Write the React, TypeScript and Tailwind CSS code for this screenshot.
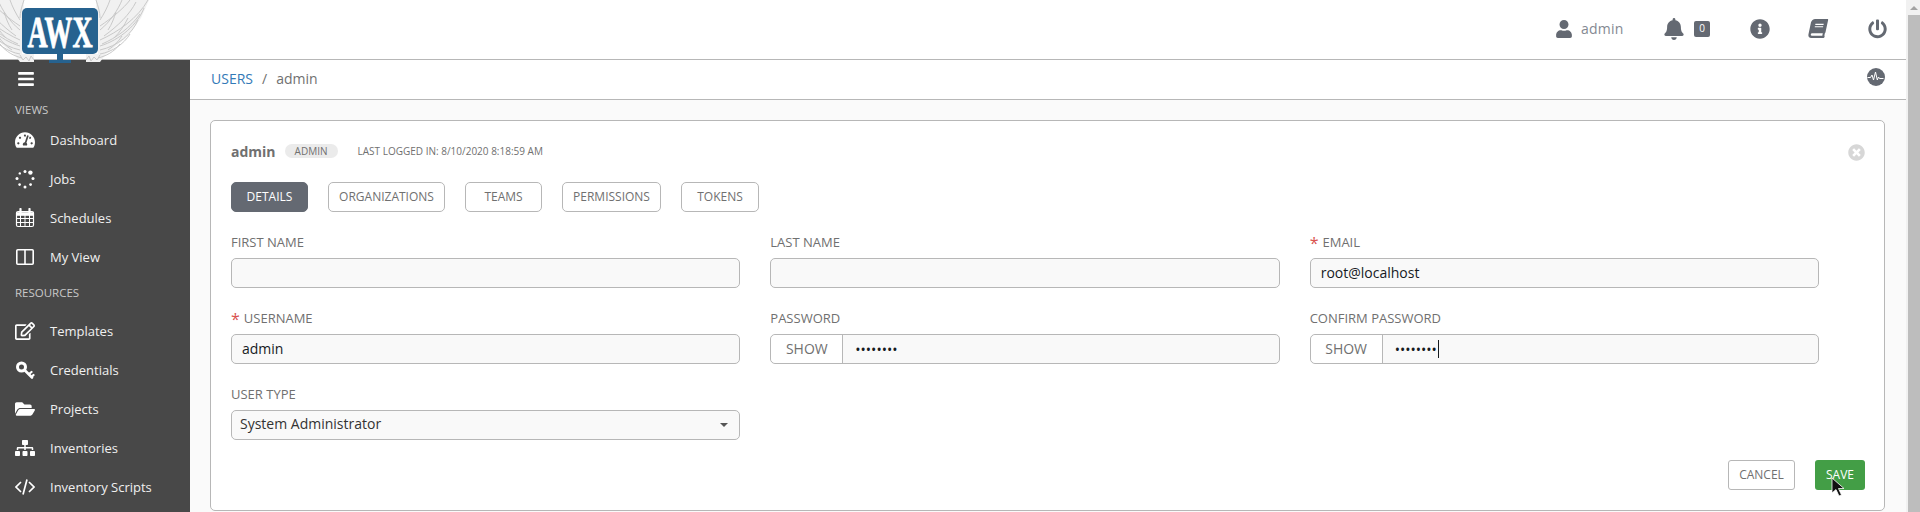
import { ReactNode } from 'react'
import {
  FaBars, FaBell, FaBook, FaFolderOpen, FaInfoCircle,
  FaPowerOff, FaRegEdit, FaSitemap, FaTachometerAlt, FaTimesCircle, FaUser,
} from 'react-icons/fa'

function JobsIcon() {
  const dots: [number, number, number][] = [
    [10, 2.6, 1.5], [15.4, 3.6, 2.2], [18, 9.6, 1.5], [15.6, 15.6, 1.4],
    [10, 18, 1.5], [4.6, 15.6, 1.3], [2, 9.6, 1.5], [4.8, 4.4, 1.2],
  ]
  return (
    <svg viewBox="0 0 20 20" className="w-[20px] h-[20px]" fill="currentColor">
      {dots.map(([cx, cy, r]) => <circle key={`${cx}-${cy}`} cx={cx} cy={cy} r={r} />)}
    </svg>
  )
}

function CalendarIcon() {
  return (
    <svg viewBox="0 0 20 20" className="w-[20px] h-[20px]" fill="none" stroke="currentColor">
      <rect x="1.500" y="3.500" width="17" height="15" rx="1.500" strokeWidth="1.2" />
      <path d="M1.500 4.500h17v3h-17z" fill="currentColor" strokeWidth="0.6" />
      <path d="M5.500 7v11M10 7v11M14.500 7v11M1.500 10.500h17M1.500 14.500h17" strokeWidth="1" />
      <path d="M5.500 1v4M14.500 1v4" strokeWidth="2.2" strokeLinecap="round" />
    </svg>
  )
}

function ColumnsIcon() {
  return (
    <svg viewBox="0 0 20 20" className="w-[20px] h-[20px]" fill="none" stroke="currentColor" strokeWidth="1.6">
      <rect x="1.800" y="2.800" width="16.400" height="14.400" rx="1" />
      <path d="M10 2.800v14.400" />
    </svg>
  )
}

function KeyIcon() {
  return (
    <svg viewBox="0 0 20 20" className="w-[20px] h-[20px]" fill="none" stroke="currentColor" strokeLinecap="round">
      <circle cx="6.500" cy="7" r="4" strokeWidth="3" />
      <path d="M10 10.500l7 7" strokeWidth="2.600" />
      <path d="M14 14l2.500-2M17 16.500l1.500-1.500" strokeWidth="2.200" />
    </svg>
  )
}

function CodeIcon() {
  return (
    <svg viewBox="0 0 20 20" className="w-[20px] h-[20px]" fill="none" stroke="currentColor" strokeWidth="1.700">
      <path d="M6 5l-5 5 5 5M14 5l5 5-5 5M12 2.500L8 17.500" />
    </svg>
  )
}

function PulseIcon() {
  return (
    <svg viewBox="0 0 18 18" className="w-[18px] h-[18px] mb-[3px]">
      <circle cx="9" cy="9" r="9" fill="#646972" />
      <path d="M0.500 9.500h3l1.500-2.500 1.500 5 2-8 1.800 8 1.200-3 1 1.500h4" fill="none" stroke="#fff" strokeWidth="1" />
    </svg>
  )
}

function Logo() {
  const right = [
    'M100 40C118 32 138 18 148 0', 'M100 46C120 40 138 24 144 8', 'M100 50C118 46 132 34 138 20',
    'M100 30C110 22 118 10 122 0', 'M100 20C104 14 108 6 110 0', 'M100 54C112 52 124 44 130 34',
    'M98 58C106 56 114 52 120 44', 'M86 60l3-4 2 5 3-4 3 3 3-5', 'M96 0C98 6 100 12 100 18',
    'M104 36C118 26 130 14 136 2', 'M102 44C116 38 130 28 140 14', 'M100 26C112 18 124 8 130 0',
    'M108 30C112 24 114 18 116 12', 'M114 38C120 32 124 26 128 18', 'M108 50C114 46 118 42 122 36',
  ]
  const wing = 'M96 0H149L141 18L126 38L106 54L100 62H86V54H98Z'
  return (
    <svg viewBox="0 0 152 64" className="absolute left-0 top-0 w-[152px] h-[64px] z-10">
      <g fill="none" stroke="#c9c9c9" strokeWidth="1">
        <path d={wing} fill="#f1f1f1" stroke="none" />
        {right.map((d) => <path key={d} d={d} />)}
        <g transform="translate(120 0) scale(-1 1)">
          <path d={wing} fill="#f1f1f1" stroke="none" />
          {right.map((d) => <path key={d} d={d} />)}
        </g>
      </g>
      <rect x="22" y="8" width="76" height="46" rx="5" fill="#26628f" />
      <rect x="57" y="54" width="6" height="6" fill="#26628f" />
      <rect x="49" y="60" width="22" height="3" fill="#26628f" />
      <text x="60" y="47" textAnchor="middle" fill="#fff" stroke="#fff" strokeWidth="0.8" fontSize="45" fontWeight="700" fontFamily="'Liberation Serif', serif" textLength="65" lengthAdjust="spacingAndGlyphs">AWX</text>
    </svg>
  )
}

function NavItem({ icon, label }: { icon: ReactNode; label: string }) {
  return (
    <div className="h-[39px] flex items-center gap-[15px] pl-[15px] text-[#f0f0f0] text-[13px]">
      <span className="w-[20px] flex justify-center text-white text-[20px]">{icon}</span>
      <span className="pt-[2px]">{label}</span>
    </div>
  )
}

function Sidebar() {
  return (
    <aside className="w-[190px] shrink-0 bg-[#484848]">
      <div className="h-[40px] pl-[17px] pb-[2px] flex items-center text-white text-[18px]"><FaBars /></div>
      <div className="h-[20px] pl-[15px] flex items-center text-[11.5px] text-[#c9c9c9]">VIEWS</div>
      <NavItem icon={<FaTachometerAlt />} label="Dashboard" />
      <NavItem icon={<JobsIcon />} label="Jobs" />
      <NavItem icon={<CalendarIcon />} label="Schedules" />
      <NavItem icon={<ColumnsIcon />} label="My View" />
      <div className="h-[35px] pb-[1px] pl-[15px] flex items-center text-[11.5px] text-[#c9c9c9]">RESOURCES</div>
      <NavItem icon={<FaRegEdit />} label="Templates" />
      <NavItem icon={<KeyIcon />} label="Credentials" />
      <NavItem icon={<FaFolderOpen />} label="Projects" />
      <NavItem icon={<FaSitemap />} label="Inventories" />
      <NavItem icon={<CodeIcon />} label="Inventory Scripts" />
    </aside>
  )
}

function Header() {
  return (
    <header className="h-[60px] shrink-0 bg-white border-b border-[#b7b7b7] pb-[2px] flex items-center justify-end text-[#646972] relative">
      <FaUser className="w-[16px] h-[18px] mr-[9px]" />
      <span className="w-[41px] text-[14px] text-[#848992] tracking-[0.2px] mr-[42px]">admin</span>
      <FaBell className="w-[20px] h-[22px] mr-[10px]" />
      <span className="w-[16px] h-[16px] rounded-[2px] bg-[#646972] text-white text-[10px] flex items-center justify-center mr-[40px]">0</span>
      <FaInfoCircle className="w-[20px] h-[20px] mr-[38px]" />
      <FaBook className="w-[20px] h-[19px] -skew-x-12 mr-[40px]" />
      <FaPowerOff className="w-[19px] h-[20px] mr-[19px]" />
    </header>
  )
}

function TabButton({ label, width, active }: { label: string; width: string; active?: boolean }) {
  return (
    <button className={`h-[30px] rounded-[5px] border text-[12px] ${width} ${active ? 'bg-[#646972] border-[#646972] text-white' : 'bg-white border-[#b7b7b7] text-[#707070]'}`}>
      {label}
    </button>
  )
}

function Field({ label, required, children }: { label: string; required?: boolean; children: ReactNode }) {
  return (
    <div>
      <div className="h-[18px] mb-[7px] pt-[2px] flex items-center text-[13px] text-[#707070]">
        {required && <span className="text-[#d9534f] text-[16px] leading-none mr-[4px]">*</span>}
        {label}
      </div>
      {children}
    </div>
  )
}

const inputBox = 'h-[30px] w-full rounded-[5px] border border-[#b7b7b7] bg-[#f9f9f9] text-[14px] text-[#161b1f] flex items-center'

function TextInput({ value }: { value?: string }) {
  return <input readOnly value={value ?? ''} className={`${inputBox} px-[10px] pb-[2px] outline-none`} />
}

function PasswordInput({ showWidth, caret }: { showWidth: string; caret?: boolean }) {
  return (
    <div className={inputBox}>
      <span className={`${showWidth} h-full pb-[2px] shrink-0 flex items-center justify-center bg-white rounded-l-[5px] border-r border-[#b7b7b7] text-[#707070]`}>SHOW</span>
      <span className="pl-[12px]">••••••••</span>
      {caret && <span className="w-px h-[18px] ml-[1px] bg-[#161b1f]" />}
    </div>
  )
}

function Cursor() {
  return (
    <svg viewBox="0 0 14 20" className="absolute left-[16px] top-[17px] w-[14px] h-[20px]">
      <path d="M1 1v15l4-3.500 3 6.500 2.500-1-3-6.500h5.500z" fill="#111" stroke="#fff" strokeWidth="0.8" />
    </svg>
  )
}

function UserCard() {
  return (
    <section className="h-[391px] bg-white border border-[#b7b7b7] rounded-[5px] pt-[20px] pl-[20px] pr-[65px] relative">
      <div className="h-[20px] flex items-center text-[#707070]">
        <span className="font-bold text-[14px] mr-[9px]">admin</span>
        <span className="w-[53px] h-[14px] rounded-full bg-[#ebebeb] text-[10px] flex items-center justify-center mr-[20px]">ADMIN</span>
        <span className="text-[10px]">LAST LOGGED IN: 8/10/2020 8:18:59 AM</span>
      </div>
      <FaTimesCircle className="absolute right-[19px] top-[23px] text-[17px] text-[#d7d7d7]" />
      <div className="flex gap-[20px] mt-[21px]">
        <TabButton label="DETAILS" width="w-[77px]" active />
        <TabButton label="ORGANIZATIONS" width="w-[117px]" />
        <TabButton label="TEAMS" width="w-[77px]" />
        <TabButton label="PERMISSIONS" width="w-[99px]" />
        <TabButton label="TOKENS" width="w-[78px]" />
      </div>
      <div className="grid grid-cols-3 gap-x-[30px] gap-y-[21px] mt-[21px]">
        <Field label="FIRST NAME"><TextInput /></Field>
        <Field label="LAST NAME"><TextInput /></Field>
        <Field label="EMAIL" required><TextInput value="root@localhost" /></Field>
        <Field label="USERNAME" required><TextInput value="admin" /></Field>
        <Field label="PASSWORD"><PasswordInput showWidth="w-[72px]" /></Field>
        <Field label="CONFIRM PASSWORD"><PasswordInput showWidth="w-[72px]" caret /></Field>
        <Field label="USER TYPE">
          <div className={`${inputBox} pl-[8px] pr-[9px] pb-[3px] justify-between text-[#333]`}>
            System Administrator
            <span className="w-0 h-0 mt-[3px] mr-[2px] border-x-[4px] border-x-transparent border-t-[4px] border-t-[#555]" />
          </div>
        </Field>
      </div>
      <div className="absolute right-[19px] top-[339px] flex gap-[20px]">
        <button className="w-[67px] h-[30px] rounded-[3px] border border-[#b7b7b7] bg-white text-[12px] text-[#707070]">CANCEL</button>
        <button className="w-[50px] h-[30px] rounded-[3px] bg-[#439e46] text-[12px] text-white relative">
          SAVE
          <Cursor />
        </button>
      </div>
    </section>
  )
}

export default function App() {
  return (
    <div className="h-[512px] w-full overflow-hidden flex bg-white font-['Open_Sans',sans-serif] relative">
      <div className="flex-1 min-w-0 flex flex-col">
        <Header />
        <div className="flex flex-1 min-h-0">
          <Sidebar />
          <main className="flex-1 min-w-0 bg-[#fafafa]">
            <div className="h-[40px] bg-white border-b border-[#b7b7b7] pl-[21px] pr-[21px] pb-[2px] flex items-center justify-between text-[14px]">
              <div className="flex items-center">
                <span className="text-[#337ab7]">USERS</span>
                <span className="text-[#707070] mx-[9px]">/</span>
                <span className="text-[#707070]">admin</span>
              </div>
              <PulseIcon />
            </div>
            <div className="pt-[20px] pl-[20px] pr-[21px]">
              <UserCard />
            </div>
          </main>
        </div>
      </div>
      <div className="w-[14px] shrink-0 bg-[#f1f1f1] flex flex-col items-center pl-[2px]">
        <span className="h-[15px] flex items-center">
          <span className="w-0 h-0 border-x-[4px] border-x-transparent border-b-[4px] border-b-[#a3a3a3]" />
        </span>
        <span className="flex-1 w-full bg-[#bdbdbd]" />
      </div>
      <Logo />
    </div>
  )
}
